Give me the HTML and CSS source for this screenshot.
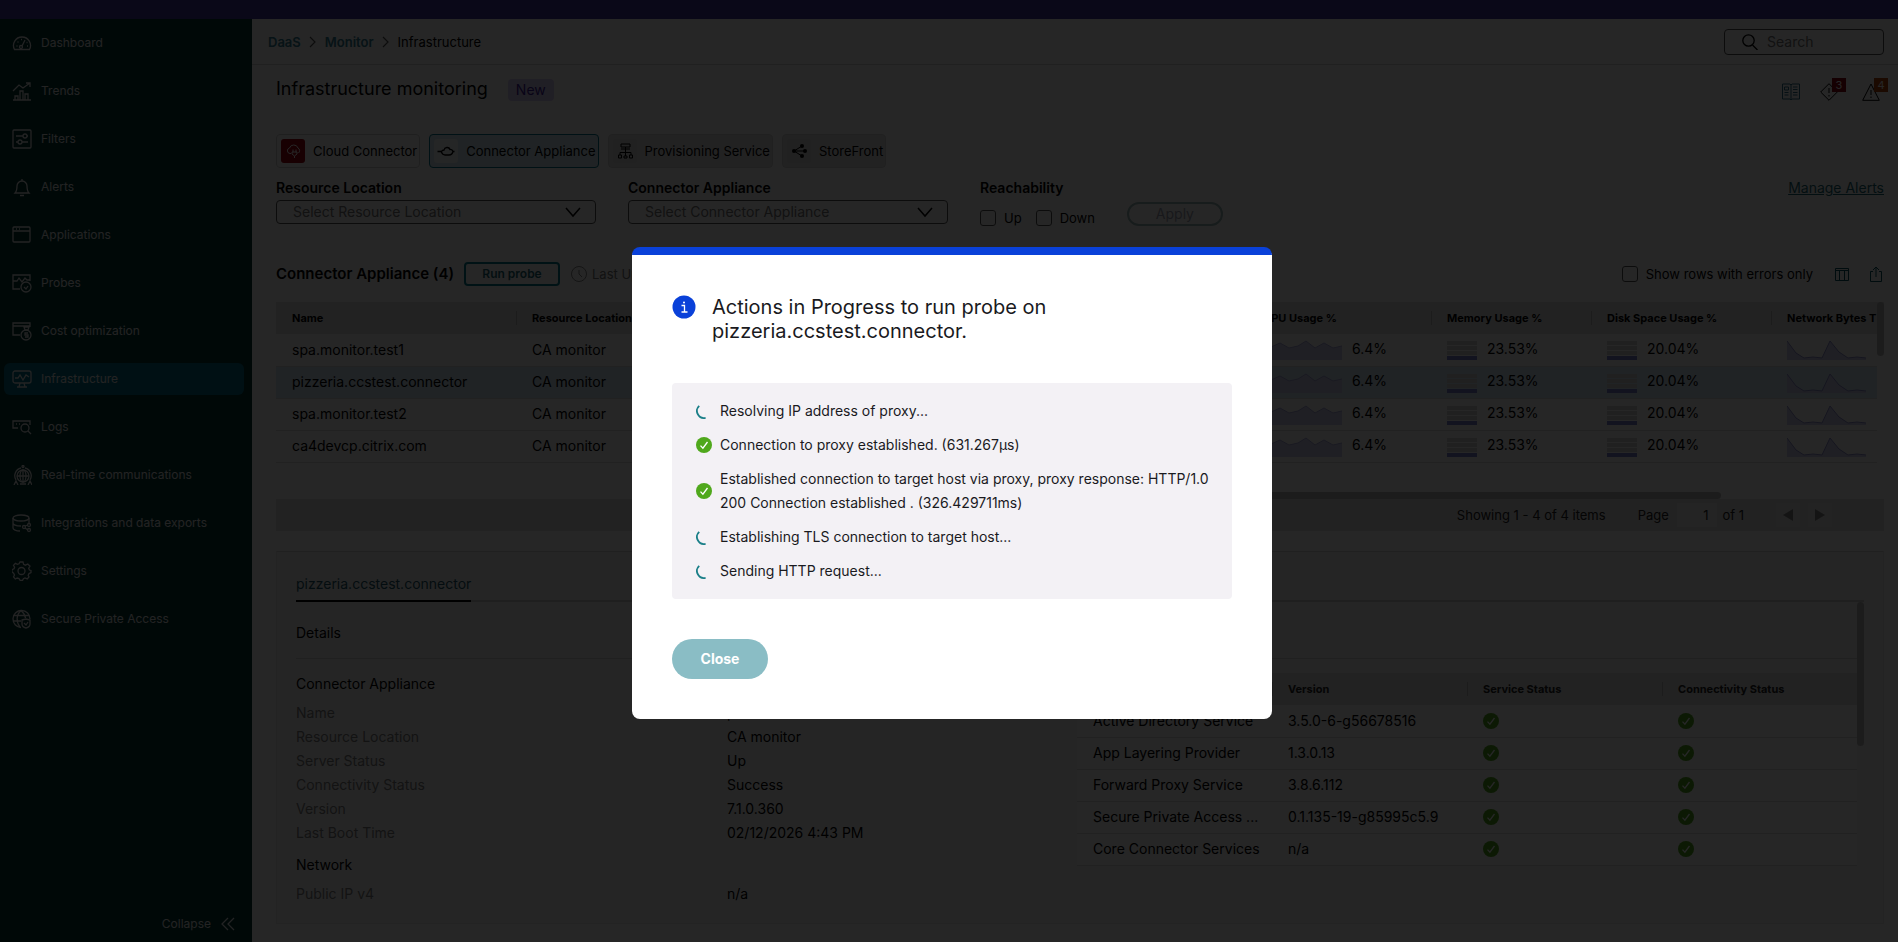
FILE: index.html
```html
<!DOCTYPE html>
<html lang="en">
<head>
  <meta charset="UTF-8">
  <meta name="viewport" content="width=device-width, initial-scale=1">
  <title>Infrastructure monitoring</title>
  <link rel="stylesheet" href="styles.css">
</head>
<body>
  <!-- shared icons -->
  <svg class="sprite" aria-hidden="true">
    <symbol id="ok" viewBox="0 0 16 16">
      <circle cx="8" cy="8" r="8" fill="#4fa81c" />
      <path d="M4.500 8.600l2.400 2.600 4.600-6.200" fill="none" stroke="#fff" stroke-width="1.300" />
    </symbol>
    <symbol id="spinner" viewBox="0 0 16 16">
      <path d="M3.200 2.900A7 7 0 0 0 9.600 14.800" fill="none" stroke="#1a7f88" stroke-width="1.800" />
    </symbol>
    <symbol id="chevron" viewBox="0 0 16 16">
      <path d="M1 4l7 8 7-8" fill="none" stroke="#000" stroke-width="1.500" />
    </symbol>
    <symbol id="crumb" viewBox="0 0 8 12">
      <path d="M1 1l5 5-5 5" fill="none" stroke="#555" stroke-width="1.200" />
    </symbol>
    <symbol id="cpu" viewBox="0 0 79 20">
      <path d="M0 6L8 7L17 3L26 8L35 6L43 1L52 8L61 3L70 8L79 6V20H0Z" fill="#d0d0f0" />
      <path d="M0 6L8 7L17 3L26 8L35 6L43 1L52 8L61 3L70 8L79 6" fill="none" stroke="#a9a9dc" />
    </symbol>
    <symbol id="net" viewBox="0 0 79 20">
      <path d="M0 1L9 13L17 18L26 17L35 18L43 1L52 12L61 18L70 17L79 18V20H0Z" fill="#d0d0f0" />
      <path d="M0 1L9 13L17 18L26 17L35 18L43 1L52 12L61 18L70 17L79 18" fill="none" stroke="#8f8fce" />
    </symbol>
    <symbol id="gauge" viewBox="0 0 30 20">
      <path d="M0 1h30v4H0zM0 6h30v4H0zM0 11h30v4H0z" fill="#d4d4d8" />
      <path d="M0 16h30v4H0z" fill="#7a80d0" />
    </symbol>
  </svg>

  <div class="banner"></div>
  <div class="layout">
    <nav class="sidebar">
      <a href="#"><svg viewBox="0 0 20 20"><path d="M2.500 16.500a8.500 8.500 0 1 1 15 0z" /><circle cx="9" cy="14" r="1.500" /><path d="M10 13l3-6M4.500 13h1M5.500 9h1M9 6.500h1M15 13h1M14.500 9.500h1" /></svg>Dashboard</a>
      <a href="#"><svg viewBox="0 0 20 20"><path d="M1 19h18M3 19v-4h3v4M8 19v-9h3v9M13 19v-6h3v6M1 10l6-6 4 3 7-5M14 2h4v4" /></svg>Trends</a>
      <a href="#"><svg viewBox="0 0 20 20"><rect x="1" y="1" width="18" height="18" rx="1" /><path d="M4 7h7M15 7h1M4 13h2M10 13h6" /><circle cx="13" cy="7" r="2" /><circle cx="8" cy="13" r="2" /></svg>Filters</a>
      <a href="#"><svg viewBox="0 0 20 20"><path d="M3 16c2-2 2-4 2-7a5 5 0 0 1 10 0c0 3 0 5 2 7zM10 2v2M8 18.500h4" /></svg>Alerts</a>
      <a href="#"><svg viewBox="0 0 20 20"><rect x="1" y="2" width="17" height="15" rx="1" /><path d="M1 6h17M4 4h1M7 4h1" /></svg>Applications</a>
      <a href="#"><svg viewBox="0 0 20 20"><path d="M8 16H1V2h17v6M1 8h4l2-3 3 4 3-4 2 2h3" /><circle cx="14" cy="14" r="5" /><path d="M12 14l2 2 2-3" /></svg>Probes</a>
      <a href="#"><svg viewBox="0 0 20 20"><path d="M8 14H1V2h17v4M1 5h17M12 6l1 3h3l1-3z" /><circle cx="14" cy="14" r="5" /><path d="M16 12h-3v2h3v2h-3" /></svg>Cost optimization</a>
      <a href="#" class="active"><svg viewBox="0 0 20 20"><rect x="1" y="2" width="18" height="12" rx="2" /><path d="M3 9h3l2-3 3 5 3-5 3 2M8 14l-1 4M12 14l1 4M5 18h10" /></svg>Infrastructure</a>
      <a href="#"><svg viewBox="0 0 20 20"><path d="M6 11H1V4h17v4M4 7h1M7 7h1" /><circle cx="13" cy="11" r="4" /><path d="M16 14l3 3" /></svg>Logs</a>
      <a href="#"><svg viewBox="0 0 20 20"><circle cx="11" cy="11" r="6" /><ellipse cx="11" cy="11" rx="3" ry="6" /><path d="M5 11h12M11 5v12M4 15a8 8 0 0 1 5-12M18 15a8 8 0 0 0-5-12M2 20l2-4 2 4M16 20l2-4 2 4M8 19h6" /><circle cx="11" cy="1.500" r="1" /></svg>Real-time communications</a>
      <a href="#"><svg viewBox="0 0 20 20"><ellipse cx="9" cy="5" rx="8" ry="3" /><path d="M1 5v10c0 1.500 3 3 7 3M17 5v5M1 10c0 1.500 3 3 8 3" /><circle cx="12" cy="14" r="1.500" /><circle cx="17" cy="12" r="1.500" /><circle cx="17" cy="17" r="1.500" /><path d="M13 13l3-1M13 15l3 2" /></svg>Integrations and data exports</a>
      <a href="#"><svg viewBox="0 0 20 20"><path d="M8 1h3l.6 2.400 1.800.8L15.800 3 18 5.200l-1.300 2 .7 1.800 1.600.5v2.200l-2 .9-.8 1.700L17 16l-1.800 1.900-2.200-.9-1.600.7-.9 1.800H8.200L7 17.500 5.200 17 3.300 18 1.500 16l1-2-.9-1.900L0 11V8.700l2-.9.6-1.600L1.500 4.300 3.400 2.400l2 .9L7 2.800z" /><circle cx="9.500" cy="10" r="3.500" /></svg>Settings</a>
      <a href="#"><svg viewBox="0 0 20 20"><path d="M9 18.500A8.500 8.500 0 1 1 18 10" /><path d="M8 18C4 13 4 6 9 1.500 12 4 13 6 13.500 9M2 6.500h15M1 12h8M10 11l4-1 4 1v4c0 2-2 3.500-4 4-2-.5-4-2-4-4z" /><path d="M12 14l2 2 2-3" /></svg>Secure Private Access</a>
      <button type="button" class="collapse">Collapse<svg viewBox="0 0 14 14"><path d="M7 1L1 7l6 6M13 1L7 7l6 6" /></svg></button>
    </nav>

    <main class="main">
      <header class="topbar">
        <a href="#">DaaS</a><svg><use href="#crumb" /></svg><a href="#">Monitor</a><svg><use href="#crumb" /></svg><span>Infrastructure</span>
        <label class="search">
          <svg viewBox="0 0 16 16"><circle cx="6.500" cy="6.500" r="5.700" /><path d="M10.500 11l5 5" /></svg>
          <input type="text" placeholder="Search" aria-label="Search">
        </label>
      </header>

      <div class="content">
        <div class="title-row">
          <h1>Infrastructure monitoring</h1>
          <span class="new">New</span>
          <div class="status">
            <svg class="book" viewBox="0 0 18 18"><path d="M.5 1H8l1 1 1-1h7.500v15H10l-1 1-1-1H.5zM9 2v14M2.500 4h4v3h-4zM2.500 9.500h4M2.500 12h4M11 4h4.500M11 6.500h4.500M11 9.500h4.500M11 12h4.500" /></svg>
            <span class="alert"><svg viewBox="0 0 18 18"><path d="M9 .7L17.300 9 9 17.300.7 9zM9 5v5M9 12v1.500" /></svg><b>3</b></span>
            <span class="alert warn"><svg viewBox="0 0 18 18"><path d="M9 1L17.300 17.300H.7zM9 7v5M9 13.500V15" /></svg><b>4</b></span>
          </div>
        </div>

        <div class="tabs">
          <button type="button" class="tab"><svg class="red" viewBox="0 0 24 24"><path d="M10 14.500H9a2.800 2.800 0 0 1-.5-5.500 4.500 4.500 0 0 1 8.500 0 3 3 0 0 1 .5 5M12 10.500v3M15 10.500v3M11 13h5v2l-2.500 2L11 15zM13.500 17v2" stroke="#fff" /></svg>Cloud Connector</button>
          <button type="button" class="tab selected"><svg class="white" viewBox="0 0 24 24"><path d="M3.500 12.500h3.500c1-.5 1.500-1.500 3-1.500.5-3 5-3.500 6-.5 1.500-.3 2.500.5 3 2h1.500M7 12.500c1 2 2 3.500 4 3.500h4c2 0 3.500-1.500 4-3.500" stroke="#000" stroke-width="1.300" /></svg>Connector Appliance</button>
          <button type="button" class="tab off"><svg viewBox="0 0 24 24"><path d="M8 5h9v3H8zM8 10h9M12.500 8v9M7 16v-2.500h11V16M5.500 16h3v3h-3zM11 17h3v2h-3zM16.500 16h3v3h-3z" stroke="#000" /></svg>Provisioning Service</button>
          <button type="button" class="tab off"><svg viewBox="0 0 24 24"><path d="M7 12l8-5M7 12l8 5M7 12h11" stroke="#000" /><circle cx="7" cy="12" r="2" /><circle cx="15" cy="7" r="2" /><circle cx="15" cy="17" r="2" /><circle cx="18" cy="12" r="2" /></svg>StoreFront</button>
        </div>

        <div class="filters">
          <div class="field">
            <label for="location">Resource Location</label>
            <div class="select"><select id="location"><option>Select Resource Location</option></select><svg><use href="#chevron" /></svg></div>
          </div>
          <div class="field">
            <label for="appliance">Connector Appliance</label>
            <div class="select"><select id="appliance"><option>Select Connector Appliance</option></select><svg><use href="#chevron" /></svg></div>
          </div>
          <fieldset>
            <legend>Reachability</legend>
            <div class="checks">
              <label><input type="checkbox">Up</label>
              <label><input type="checkbox">Down</label>
            </div>
          </fieldset>
          <button type="button" class="apply" disabled>Apply</button>
          <a href="#" class="manage">Manage Alerts</a>
        </div>

        <div class="toolbar">
          <h2>Connector Appliance (4)</h2>
          <button type="button" class="probe">Run probe</button>
          <svg class="clock" viewBox="0 0 16 16"><circle cx="8" cy="8" r="7.500" /><path d="M8 4v4l3 3" /></svg>
          <span class="updated">Last Updated</span>
          <label class="errors"><input type="checkbox">Show rows with errors only</label>
          <button type="button" class="tool" aria-label="Columns"><svg viewBox="0 0 16 16"><path d="M1.500 2.500h13v12h-13zM1.500 4.500h13M5.500 4.500v10M10.500 4.500v10" /></svg></button>
          <button type="button" class="tool" aria-label="Export"><svg viewBox="0 0 16 16"><path d="M5 5.500H2.500v10h11v-10H11M8 11V1M5 4l3-3 3 3" /></svg></button>
        </div>

        <div class="grid">
          <table>
            <colgroup><col class="c-name"><col><col class="c-cpu"><col class="c-mem"><col class="c-disk"><col class="c-net"></colgroup>
            <thead>
              <tr><th>Name</th><th>Resource Location</th><th>CPU Usage %</th><th>Memory Usage %</th><th>Disk Space Usage %</th><th>Network Bytes T</th></tr>
            </thead>
            <tbody>
              <tr><td>spa.monitor.test1</td><td>CA monitor</td><td><svg class="spark"><use href="#cpu" /></svg>6.4%</td><td><svg class="gauge"><use href="#gauge" /></svg>23.53%</td><td><svg class="gauge"><use href="#gauge" /></svg>20.04%</td><td><svg class="spark"><use href="#net" /></svg></td></tr>
              <tr class="current"><td>pizzeria.ccstest.connector</td><td>CA monitor</td><td><svg class="spark"><use href="#cpu" /></svg>6.4%</td><td><svg class="gauge"><use href="#gauge" /></svg>23.53%</td><td><svg class="gauge"><use href="#gauge" /></svg>20.04%</td><td><svg class="spark"><use href="#net" /></svg></td></tr>
              <tr><td>spa.monitor.test2</td><td>CA monitor</td><td><svg class="spark"><use href="#cpu" /></svg>6.4%</td><td><svg class="gauge"><use href="#gauge" /></svg>23.53%</td><td><svg class="gauge"><use href="#gauge" /></svg>20.04%</td><td><svg class="spark"><use href="#net" /></svg></td></tr>
              <tr><td>ca4devcp.citrix.com</td><td>CA monitor</td><td><svg class="spark"><use href="#cpu" /></svg>6.4%</td><td><svg class="gauge"><use href="#gauge" /></svg>23.53%</td><td><svg class="gauge"><use href="#gauge" /></svg>20.04%</td><td><svg class="spark"><use href="#net" /></svg></td></tr>
            </tbody>
          </table>
          <div class="bar-v"></div>
          <div class="bar-h"></div>
        </div>
        <div class="pager">
          <span class="count">Showing <span>1 - 4</span> of <span>4</span> items</span>
          <label>Page <input type="text" value="1"></label>
          <span>of 1</span>
          <div class="steps">
            <button type="button" aria-label="Previous page"><svg viewBox="0 0 10 12"><path d="M10 0v12L0 6z" /></svg></button>
            <button type="button" aria-label="Next page"><svg viewBox="0 0 10 12"><path d="M0 0v12l10-6z" /></svg></button>
          </div>
        </div>

        <section class="panel">
          <div class="panel-tabs"><a href="#">pizzeria.ccstest.connector</a></div>
          <div class="panel-body">
            <h3>Details</h3>
            <div class="columns">
              <div class="info">
                <h4>Connector Appliance</h4>
                <dl>
                  <dt>Name</dt><dd>pizzeria.ccstest.connector</dd>
                  <dt>Resource Location</dt><dd>CA monitor</dd>
                  <dt>Server Status</dt><dd>Up</dd>
                  <dt>Connectivity Status</dt><dd>Success</dd>
                  <dt>Version</dt><dd>7.1.0.360</dd>
                  <dt>Last Boot Time</dt><dd>02/12/2026 4:43 PM</dd>
                </dl>
                <h4>Network</h4>
                <dl><dt>Public IP v4</dt><dd>n/a</dd></dl>
              </div>
              <table class="services">
                <thead><tr><th>Service Name</th><th>Version</th><th>Service Status</th><th>Connectivity Status</th></tr></thead>
                <tbody>
                  <tr><td>Active Directory Service</td><td>3.5.0-6-g56678516</td><td><svg class="ok"><use href="#ok" /></svg></td><td><svg class="ok"><use href="#ok" /></svg></td></tr>
                  <tr><td>App Layering Provider</td><td>1.3.0.13</td><td><svg class="ok"><use href="#ok" /></svg></td><td><svg class="ok"><use href="#ok" /></svg></td></tr>
                  <tr><td>Forward Proxy Service</td><td>3.8.6.112</td><td><svg class="ok"><use href="#ok" /></svg></td><td><svg class="ok"><use href="#ok" /></svg></td></tr>
                  <tr><td>Secure Private Access ...</td><td>0.1.135-19-g85995c5.9</td><td><svg class="ok"><use href="#ok" /></svg></td><td><svg class="ok"><use href="#ok" /></svg></td></tr>
                  <tr><td>Core Connector Services</td><td>n/a</td><td><svg class="ok"><use href="#ok" /></svg></td><td><svg class="ok"><use href="#ok" /></svg></td></tr>
                </tbody>
              </table>
            </div>
            <div class="bar-v"></div>
          </div>
        </section>
      </div>
    </main>
  </div>

  <div class="overlay">
    <div class="modal" role="dialog" aria-modal="true" aria-labelledby="modal-title">
      <div class="modal-head">
        <svg viewBox="0 0 24 24"><circle cx="12" cy="12" r="11.500" fill="#0a41d9" /><path d="M9.500 10.500h3V17M9.500 17h6" fill="none" stroke="#fff" stroke-width="1.300" /><circle cx="12" cy="7.500" r="1" fill="#fff" /></svg>
        <h2 id="modal-title">Actions in Progress to run probe on pizzeria.ccstest.connector.</h2>
      </div>
      <ul>
        <li><svg><use href="#spinner" /></svg><span>Resolving IP address of proxy...</span></li>
        <li><svg><use href="#ok" /></svg><span>Connection to proxy established. (631.267µs)</span></li>
        <li><svg><use href="#ok" /></svg><span>Established connection to target host via proxy, proxy response: HTTP/1.0 200 Connection established . (326.429711ms)</span></li>
        <li><svg><use href="#spinner" /></svg><span>Establishing TLS connection to target host...</span></li>
        <li><svg><use href="#spinner" /></svg><span>Sending HTTP request...</span></li>
      </ul>
      <button type="button" class="close">Close</button>
    </div>
  </div>
</body>
</html>
```
FILE: styles.css
```css
* {
  box-sizing: border-box;
}
body {
  margin: 0;
  min-height: 100vh;
  display: flex;
  flex-direction: column;
  background: #fff;
  color: #000;
  font: 14px/20px Inter, "Liberation Sans", sans-serif;
}
h1, h2, h3, h4, ul, dl, dd, fieldset, legend {
  margin: 0;
  padding: 0;
  border: 0;
  font-size: 14px;
  font-weight: 400;
}
button, input, select {
  font: inherit;
  color: inherit;
}
svg {
  flex: none;
}
.sprite {
  position: absolute;
  width: 0;
  height: 0;
}
.banner {
  height: 19px;
  background: #4335a0;
}
.layout {
  flex: 1;
  display: flex;
}

/* sidebar */
.sidebar {
  width: 252px;
  padding: 8px 8px 2px 4px;
  display: flex;
  flex-direction: column;
  gap: 16px;
  background: #003533;
  color: #e8e8e8;
  font-size: 12px;
}
.sidebar a {
  height: 32px;
  padding-left: 8px;
  display: flex;
  align-items: center;
  gap: 9px;
  border-radius: 6px;
  color: inherit;
  text-decoration: none;
}
.sidebar a.active {
  background: #006e86;
}
.sidebar svg {
  width: 20px;
  height: 20px;
  fill: none;
  stroke: currentColor;
  stroke-width: 1.3;
}
.sidebar .collapse {
  margin-top: auto;
  height: 32px;
  padding: 0 9px;
  display: flex;
  align-items: center;
  justify-content: flex-end;
  gap: 10px;
  background: none;
  border: 0;
}
.sidebar .collapse svg {
  width: 14px;
  height: 14px;
}

/* top bar */
.main {
  flex: 1;
  min-width: 0;
}
.topbar {
  height: 46px;
  padding: 0 14px 0 16px;
  display: flex;
  align-items: center;
  gap: 8px;
  border-bottom: 1px solid #d4d4d4;
  font-size: 13px;
}
.topbar a {
  color: #2f7d93;
  font-weight: 600;
  text-decoration: none;
}
.topbar > svg {
  width: 8px;
  height: 12px;
}
.search {
  margin-left: auto;
  width: 160px;
  height: 26px;
  padding-left: 17px;
  display: flex;
  align-items: center;
  gap: 9px;
  border: 1px solid #555;
  border-radius: 4px;
  font-size: 14px;
}
.search svg {
  width: 16px;
  height: 16px;
  fill: none;
  stroke: #000;
  stroke-width: 1.3;
}
.search input {
  width: 100px;
  padding: 0;
  border: 0;
  background: none;
}
.search input::placeholder {
  color: #777;
}

.content {
  padding: 0 14px 18px 24px;
}
.title-row {
  height: 69px;
  padding-top: 12px;
  display: flex;
  align-items: flex-start;
  gap: 20px;
}
h1 {
  font-size: 18px;
  line-height: 24px;
}
.new {
  margin-top: 2px;
  padding: 0 8px;
  line-height: 22px;
  border-radius: 4px;
  background: #d8ccf6;
  color: #3d1d9c;
}
.status {
  margin: 5px 4px 0 auto;
  display: flex;
  gap: 20px;
}
.status svg {
  display: block;
  width: 18px;
  height: 20px;
  fill: none;
  stroke: #000;
}
.status .book {
  stroke: #2b6f85;
}
.alert {
  position: relative;
  margin-right: 4px;
}
.alert.warn {
  margin-right: 0;
}
.alert b {
  position: absolute;
  left: 12px;
  top: -4px;
  width: 14px;
  background: #8c0012;
  color: #fff;
  font: 11px/14px Inter, sans-serif;
  text-align: center;
}
.alert.warn b {
  background: #b5480a;
}

.tabs {
  display: flex;
  gap: 9px;
}
.tab {
  height: 34px;
  padding: 0 2px 0 4px;
  display: flex;
  align-items: center;
  gap: 8px;
  border: 1px solid #cfcfcf;
  border-radius: 4px;
  background: #fff;
  font-size: 13px;
}
.tab svg {
  width: 24px;
  height: 24px;
  border-radius: 3px;
  background: #d9d9d9;
  fill: none;
}
.tab svg circle {
  fill: #000;
}
.tab svg.red {
  background: #a0000e;
}
.tab svg.white {
  background: #f4fafc;
}
.tab.selected {
  border-color: #00728a;
  background: #d3ebf3;
}
.tab.off {
  border-color: #d4d4d4;
  background: #e3e3e3;
}

.filters {
  padding-top: 10px;
  display: flex;
  align-items: flex-start;
  gap: 32px;
}
.field {
  width: 320px;
}
.field > label, legend {
  display: block;
  height: 22px;
  font-weight: 600;
}
.select {
  position: relative;
}
.select select {
  display: block;
  width: 100%;
  height: 24px;
  padding: 0 16px;
  border: 1px solid #555;
  border-radius: 4px;
  background: none;
  color: #777;
  appearance: none;
}
.select svg {
  position: absolute;
  right: 15px;
  top: 4px;
  width: 16px;
  height: 16px;
}
.checks {
  padding-top: 8px;
  display: flex;
  gap: 14px;
  font-size: 13px;
}
.checks label, .errors {
  display: flex;
  align-items: center;
  gap: 8px;
}
input[type="checkbox"] {
  width: 16px;
  height: 16px;
  margin: 0;
  border: 1px solid #555;
  border-radius: 3px;
  appearance: none;
}
.apply {
  width: 96px;
  height: 24px;
  margin-top: 24px;
  padding: 0;
  border: 2px solid #9bb8b8;
  border-radius: 12px;
  background: none;
  color: #a0a4b4;
}
.manage {
  margin-left: auto;
  color: #1a6874;
}

.toolbar {
  height: 74px;
  padding-top: 18px;
  display: flex;
  align-items: center;
  font-size: 13px;
}
.toolbar h2 {
  margin-right: 10px;
  font-size: 15px;
  font-weight: 600;
}
.probe {
  width: 96px;
  height: 24px;
  padding: 0;
  border: 2px solid #00798c;
  border-radius: 4px;
  background: none;
  color: #1a6874;
  font-size: 12px;
  font-weight: 600;
}
.clock {
  width: 16px;
  height: 16px;
  margin: 0 5px 0 11px;
  fill: none;
  stroke: #888;
}
.updated {
  color: #777;
}
.errors {
  margin-left: auto;
  margin-right: 12px;
}
.tool {
  width: 16px;
  height: 16px;
  margin-left: 9px;
  padding: 0;
  border: 0;
  background: none;
}
.tool + .tool {
  margin-left: 18px;
}
.tool svg {
  display: block;
  fill: none;
  stroke: #00505e;
}

/* data tables */
table {
  width: 100%;
  border-collapse: collapse;
  table-layout: fixed;
}
th, td {
  height: 32px;
  padding: 0 0 0 16px;
  overflow: hidden;
  text-align: left;
  white-space: nowrap;
}
th {
  background: linear-gradient(#bbb, #bbb) left / 1px 14px no-repeat;
  font-size: 11px;
  font-weight: 700;
}
th:first-child {
  background: none;
}
thead {
  background: #e3e3e3;
}
tbody tr {
  border-bottom: 1px solid #dcdcdc;
}
.grid {
  position: relative;
  height: 197px;
  background: linear-gradient(#e3e3e3, #e3e3e3) top / 100% 32px no-repeat;
  padding-right: 7px;
}
.grid .c-name { width: 240px; }
.grid .c-cpu { width: 184px; }
.grid .c-mem { width: 160px; }
.grid .c-disk { width: 180px; }
.grid .c-net { width: 106px; }
.current {
  background: #d5e8f6;
}
.spark, .gauge {
  width: 79px;
  height: 20px;
  margin-right: 10px;
  vertical-align: middle;
}
.gauge {
  width: 30px;
}
.bar-v, .bar-h {
  position: absolute;
  right: 0;
  top: 0;
  width: 7px;
  height: 54px;
  border-radius: 4px;
  background: #bcbcbc;
}
.bar-h {
  top: auto;
  right: 163px;
  bottom: 0;
  width: 820px;
  height: 7px;
}
.pager {
  height: 32px;
  padding-right: 52px;
  display: flex;
  align-items: center;
  justify-content: flex-end;
  background: #e3e3e3;
  color: #222;
  font-size: 13px;
}
.pager .count {
  margin-right: 32px;
}
.pager input {
  width: 40px;
  height: 24px;
  margin: 0 5px;
  padding: 0 9px;
  border: 0;
  background: #f2f2f2;
  text-align: right;
}
.steps {
  margin-left: 32px;
  display: flex;
  gap: 8px;
}
.steps button {
  width: 24px;
  height: 24px;
  padding: 6px 7px;
  border: 0;
  background: #e9e9e9;
}
.steps svg {
  display: block;
  fill: #888;
}

/* details */
.panel {
  height: 373px;
  margin-top: 20px;
  padding: 20px 19px 0;
  border: 1px solid #ececec;
  border-top-color: #d8d8d8;
  background: #f8f8f8;
}
.panel-tabs {
  height: 30px;
  border-bottom: 2px solid #cfcfcf;
}
.panel-tabs a {
  display: inline-block;
  height: 30px;
  line-height: 24px;
  border-bottom: 2px solid #000;
  color: #1e5a6b;
  text-decoration: none;
}
.panel-body {
  position: relative;
  padding-right: 7px;
}
.panel-body .bar-v {
  height: 144px;
}
h3 {
  height: 57px;
  padding-top: 21px;
  border-bottom: 1px solid #d8d8d8;
}
.columns {
  display: flex;
  align-items: flex-start;
  justify-content: space-between;
}
.info {
  flex: 1;
  padding-top: 15px;
}
.info h4 {
  margin-bottom: 7px;
}
dl {
  display: grid;
  grid-template-columns: 431px 1fr;
  margin-bottom: 10px;
  line-height: 24px;
}
dt {
  color: #808080;
}
.services {
  width: 780px;
  margin-top: 14px;
  background: #fbfbfb;
}
.services th {
  color: #222;
}
.ok {
  display: block;
  width: 16px;
  height: 16px;
}

/* modal */
.overlay {
  position: fixed;
  inset: 0;
  padding: 24px 0 0 6px;
  display: flex;
  align-items: center;
  justify-content: center;
  background: rgba(0, 0, 0, 0.85);
}
.modal {
  width: 640px;
  padding: 40px;
  border-top: 8px solid #0a41d9;
  border-radius: 8px;
  background: #fff;
  color: #1a1a1e;
}
.modal-head {
  display: flex;
  gap: 16px;
}
.modal-head svg {
  width: 24px;
  height: 24px;
}
.modal-head h2 {
  width: 400px;
  font-size: 20px;
  line-height: 24px;
}
.modal ul {
  margin: 40px 0;
  padding: 16px 8px 16px 24px;
  display: grid;
  gap: 10px;
  list-style: none;
  border-radius: 4px;
  background: #f3f1f5;
  line-height: 24px;
}
.modal li {
  display: flex;
  align-items: center;
  gap: 8px;
}
.modal li svg {
  width: 16px;
  height: 16px;
}
.close {
  display: block;
  width: 96px;
  height: 40px;
  border: 0;
  border-radius: 20px;
  background: #8abdc5;
  color: #fff;
  font-weight: 700;
}
```
